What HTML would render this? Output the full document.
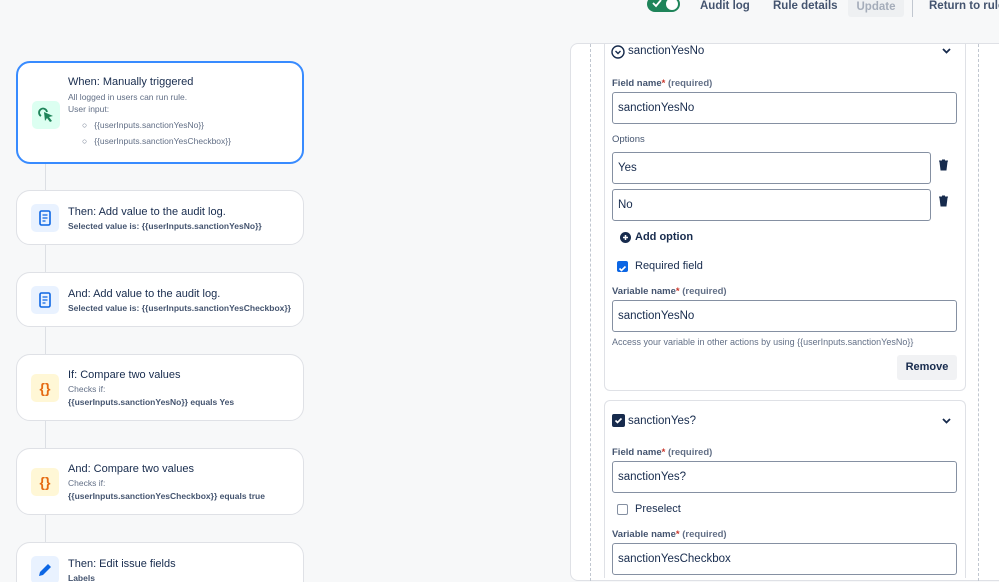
<!DOCTYPE html>
<html style="width:999px;height:582px;overflow:hidden"><head><style>
*{box-sizing:border-box;margin:0;padding:0}
body{width:999px;height:582px;overflow:hidden;background:#f7f8f9;font-family:"Liberation Sans",sans-serif;color:#172b4d;position:relative}
.a{position:absolute}
.card{position:absolute;left:16px;width:288px;background:#fff;border:1px solid #dfe1e6;border-radius:14px}
.ic{position:absolute;left:14px;width:28px;height:28px;border-radius:5px}
.t{position:absolute;left:51px;font-size:11px;color:#172b4d;white-space:nowrap}
.s{font-size:8.5px;color:#626f86;white-space:nowrap;position:absolute;left:51px}
.b{font-size:8.5px;font-weight:bold;color:#44546f;white-space:nowrap;position:absolute;left:51px}
.inp{position:absolute;left:612px;width:345px;height:32px;border:1px solid #8590a2;border-radius:3px;background:#fff;font-size:11.5px;padding:0 5px;line-height:30px;color:#172b4d}
.lbl{position:absolute;left:612px;font-size:9.5px;font-weight:bold;color:#44546f}
.lbl i{font-style:normal;color:#c9372c}
.lbl span{font-weight:bold;color:#626f86}
</style></head><body>
<div class="a" style="left:45px;top:160px;width:1px;height:422px;background:#dcdfe4"></div>

<div class="card" style="top:61px;height:103px;border:2px solid #388bff;border-radius:14px">
 <div class="ic" style="top:38px;background:#dcfff1"><svg width="28" height="28" viewBox="0 0 28 28"><path d="M9 15a4 4 0 1 1 6-4" fill="none" stroke="#1f845a" stroke-width="1.8"/><path d="M12 11l9 4-4 1 3 4-2 1-3-4-2 3z" fill="#1f845a"/></svg></div>
 <div class="t" style="top:13px;left:50px">When: Manually triggered</div>
 <div class="s" style="top:29px;left:50px">All logged in users can run rule.</div>
 <div class="s" style="top:41px;left:50px">User input:</div>
 <div class="s" style="top:57px;left:64px">○&nbsp;&nbsp;&nbsp;{{userInputs.sanctionYesNo}}</div>
 <div class="s" style="top:73px;left:64px">○&nbsp;&nbsp;&nbsp;{{userInputs.sanctionYesCheckbox}}</div>
</div>

<div class="card" style="top:190px;height:55px">
 <div class="ic" style="top:13px;background:#e9f2ff"><svg width="28" height="28"><rect x="9" y="7" width="10" height="14" rx="1.5" fill="none" stroke="#0c66e4" stroke-width="1.6"/><path d="M11.5 11h5M11.5 14h5M11.5 17h3" stroke="#0c66e4" stroke-width="1.3"/></svg></div>
 <div class="t" style="top:15px">Then: Add value to the audit log.</div>
 <div class="b" style="top:30px">Selected value is: {{userInputs.sanctionYesNo}}</div>
</div>
<div class="card" style="top:272px;height:55px">
 <div class="ic" style="top:13px;background:#e9f2ff"><svg width="28" height="28"><rect x="9" y="7" width="10" height="14" rx="1.5" fill="none" stroke="#0c66e4" stroke-width="1.6"/><path d="M11.5 11h5M11.5 14h5M11.5 17h3" stroke="#0c66e4" stroke-width="1.3"/></svg></div>
 <div class="t" style="top:15px">And: Add value to the audit log.</div>
 <div class="b" style="top:30px">Selected value is: {{userInputs.sanctionYesCheckbox}}</div>
</div>
<div class="card" style="top:354px;height:67px">
 <div class="ic" style="top:19px;background:#fff7d6;color:#e56910;font-size:14px;text-align:center;line-height:28px;font-weight:bold">{}</div>
 <div class="t" style="top:14px">If: Compare two values</div>
 <div class="s" style="top:29px">Checks if:</div>
 <div class="b" style="top:42px">{{userInputs.sanctionYesNo}} equals Yes</div>
</div>
<div class="card" style="top:448px;height:67px">
 <div class="ic" style="top:19px;background:#fff7d6;color:#e56910;font-size:14px;text-align:center;line-height:28px;font-weight:bold">{}</div>
 <div class="t" style="top:14px">And: Compare two values</div>
 <div class="s" style="top:29px">Checks if:</div>
 <div class="b" style="top:42px">{{userInputs.sanctionYesCheckbox}} equals true</div>
</div>
<div class="card" style="top:542px;height:60px">
 <div class="ic" style="top:13px;background:#e9f2ff"><svg width="28" height="28"><path d="M8 20l1-4 8-8 3 3-8 8z" fill="#0c66e4"/></svg></div>
 <div class="t" style="top:15px">Then: Edit issue fields</div>
 <div class="b" style="top:30px;color:#44546f">Labels</div>
</div>

<div class="a" style="left:647px;top:-4px;width:33px;height:16px;border-radius:8px;background:#1f845a"><div class="a" style="left:19px;top:2px;width:12px;height:12px;border-radius:6px;background:#fff"></div><svg class="a" style="left:4px;top:2px" width="12" height="10"><path d="M2 5l3 3 5-6" stroke="#fff" stroke-width="1.8" fill="none"/></svg></div>
<div class="a" style="left:700px;top:0px;font-size:11.5px;font-weight:bold;color:#44546f">Audit log</div>
<div class="a" style="left:773px;top:0px;font-size:11.5px;font-weight:bold;color:#44546f">Rule details</div>
<div class="a" style="left:848px;top:-4px;width:56px;height:21px;background:#eef0f2;border-radius:3px;font-size:11.5px;color:#a5adba;text-align:center;line-height:22px;font-weight:bold">Update</div>
<div class="a" style="left:912px;top:0;width:1px;height:17px;background:#c1c7d0"></div>
<div class="a" style="left:929px;top:0px;font-size:11.5px;font-weight:bold;color:#44546f;white-space:nowrap">Return to rules</div>

<div class="a" style="left:570px;top:43px;width:440px;height:538px;background:#fff;border:1px solid #dfe1e6;border-radius:8px"></div>
<div class="a" style="left:590px;top:44px;height:537px;border-left:1px dashed #c1c7d0"></div>
<div class="a" style="left:978px;top:44px;height:537px;border-left:1px dashed #c1c7d0"></div>
<div class="a" style="left:604px;top:44px;width:362px;height:347px;border:1px solid #dfe1e6;border-top:none;border-radius:0 0 6px 6px;background:#fff"></div>
<div class="a" style="left:604px;top:400px;width:362px;height:178px;border:1px solid #dfe1e6;border-bottom:none;border-radius:6px 6px 0 0;background:#fff"></div>

<svg class="a" style="left:611px;top:45px" width="14" height="14"><circle cx="7" cy="7" r="6" fill="none" stroke="#172b4d" stroke-width="1.4"/><path d="M4.5 6l2.5 2.5L9.5 6" stroke="#172b4d" stroke-width="1.4" fill="none"/></svg>
<div class="a" style="left:628px;top:45px;font-size:11.5px">sanctionYesNo</div>
<svg class="a" style="left:942px;top:48px" width="9" height="7"><path d="M1 1l3.5 3.5L8 1" stroke="#172b4d" stroke-width="1.8" fill="none"/></svg>

<div class="lbl" style="top:78px">Field name<i>*</i> <span>(required)</span></div>
<div class="inp" style="top:92px">sanctionYesNo</div>
<div class="a" style="left:612px;top:134px;font-size:9.5px;color:#44546f">Options</div>
<div class="inp" style="top:152px;width:319px">Yes</div>
<div class="inp" style="top:189px;width:319px">No</div>
<svg class="a" style="left:938px;top:159px" width="11" height="12"><path d="M1 2h9M4 1h3M2 3h7l-1 8H3z" fill="#172b4d" stroke="#172b4d" stroke-width="1"/></svg>
<svg class="a" style="left:938px;top:195px" width="11" height="12"><path d="M1 2h9M4 1h3M2 3h7l-1 8H3z" fill="#172b4d" stroke="#172b4d" stroke-width="1"/></svg>
<svg class="a" style="left:620px;top:232px" width="11" height="11"><circle cx="5.5" cy="5.5" r="5.5" fill="#172b4d"/><path d="M5.5 3v5M3 5.5h5" stroke="#fff" stroke-width="1.5"/></svg>
<div class="a" style="left:635px;top:231px;font-size:11px;font-weight:bold;color:#172b4d">Add option</div>
<div class="a" style="left:617px;top:261px;width:11px;height:11px;border-radius:2px;background:#0c66e4"><svg width="11" height="11"><path d="M2.5 5.5l2 2 4-4" stroke="#fff" stroke-width="1.6" fill="none"/></svg></div>
<div class="a" style="left:635px;top:260px;font-size:11px;color:#172b4d">Required field</div>
<div class="lbl" style="top:286px">Variable name<i>*</i> <span>(required)</span></div>
<div class="inp" style="top:300px">sanctionYesNo</div>
<div class="a" style="left:612px;top:337px;font-size:9px;color:#626f86">Access your variable in other actions by using {{userInputs.sanctionYesNo}}</div>
<div class="a" style="left:897px;top:355px;width:60px;height:25px;background:#f1f2f4;border-radius:3px;font-size:11px;font-weight:bold;text-align:center;line-height:25px">Remove</div>

<div class="a" style="left:612px;top:414px;width:13px;height:13px;border-radius:2px;background:#172b4d"><svg width="13" height="13"><path d="M3.5 6.5l2 2 4-4" stroke="#fff" stroke-width="1.6" fill="none"/></svg></div>
<div class="a" style="left:628px;top:415px;font-size:11.5px">sanctionYes?</div>
<svg class="a" style="left:942px;top:418px" width="9" height="7"><path d="M1 1l3.5 3.5L8 1" stroke="#172b4d" stroke-width="1.8" fill="none"/></svg>
<div class="lbl" style="top:447px">Field name<i>*</i> <span>(required)</span></div>
<div class="inp" style="top:461px">sanctionYes?</div>
<div class="a" style="left:617px;top:504px;width:11px;height:11px;border-radius:2px;border:1px solid #8590a2;background:#fff"></div>
<div class="a" style="left:635px;top:503px;font-size:11px">Preselect</div>
<div class="lbl" style="top:529px">Variable name<i>*</i> <span>(required)</span></div>
<div class="inp" style="top:543px">sanctionYesCheckbox</div>
</body></html>
